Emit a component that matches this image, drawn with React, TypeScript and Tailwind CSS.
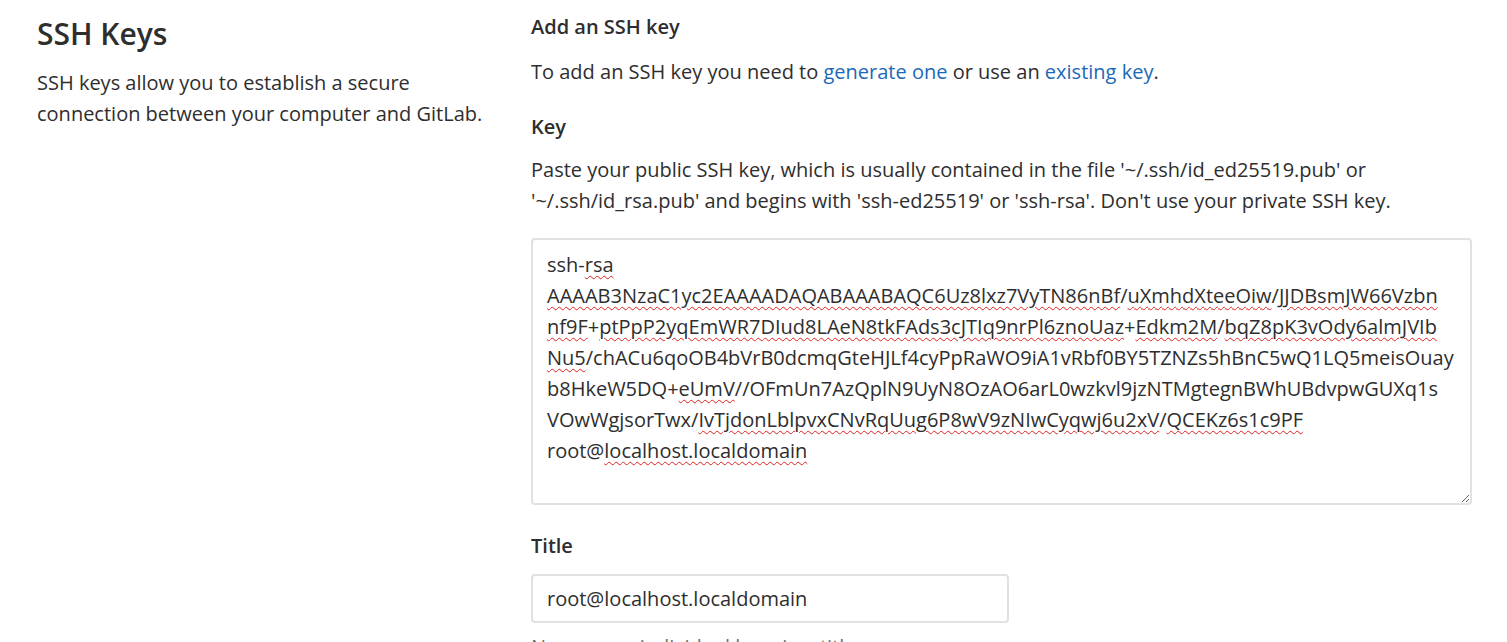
import React from 'react'

type Seg = { t: string; bad?: boolean }

// one entry per visual line of the pasted key, with the words the spell checker flags
const keyLines: Seg[][] = [
  [{ t: 'ssh-' }, { t: 'rsa', bad: true }],
  [
    { t: 'AAAAB3NzaC1yc2EAAAADAQABAAABAQC6Uz8lxz7VyTN86nBf', bad: true },
    { t: '/' },
    { t: 'uXmhdXteeOiw', bad: true },
    { t: '/' },
    { t: 'JJDBsmJW66Vzbn', bad: true },
  ],
  [
    { t: 'nf9F', bad: true },
    { t: '+' },
    { t: 'ptPpP2yqEmWR7DIud8LAeN8tkFAds3cJTIq9nrPl6znoUaz', bad: true },
    { t: '+' },
    { t: 'Edkm2M', bad: true },
    { t: '/' },
    { t: 'bqZ8pK3vOdy6almJVIb', bad: true },
  ],
  [{ t: 'Nu5', bad: true }, { t: '/chACu6qoOB4bVrB0dcmqGteHJLf4cyPpRaWO9iA1vRbf0BY5TZNZs5hBnC5wQ1LQ5meisOuay' }],
  [
    { t: 'b8HkeW5DQ+' },
    { t: 'eUmV', bad: true },
    { t: '//OFmUn7AzQplN9UyN8OzAO6arL0wzkvl9jzNTMgtegnBWhUBdvpwGUXq1s' },
  ],
  [
    { t: 'VOwWgjsorTwx/' },
    { t: 'IvTjdonLblpvxCNvRqUug6P8wV9zNIwCyqwj6u2xV', bad: true },
    { t: '/' },
    { t: 'QCEKz6s1c9PF', bad: true },
  ],
  [{ t: 'root@' }, { t: 'localhost.localdomain', bad: true }],
]

function KeyBox() {
  return (
    <div className="mt-[22px] h-[267px] w-full resize-y overflow-hidden rounded-[4px] border-2 border-[#e1e1e1] bg-white px-[14px] pt-[9px] whitespace-pre text-[#2e2e2e]">
      {keyLines.map((line, i) => (
        <div key={i}>
          {line.map((s, j) =>
            s.bad ? (
              <span key={j} className="underline decoration-wavy decoration-[#e02020] decoration-1 underline-offset-[3px]">
                {s.t}
              </span>
            ) : (
              <span key={j}>{s.t}</span>
            ),
          )}
        </div>
      ))}
    </div>
  )
}

export default function App() {
  return (
    <div className="flex min-h-screen bg-white font-['Open_Sans',sans-serif] text-[20px] leading-[31px] text-[#2e2e2e]">
      <div className="w-[494px] shrink-0 pl-[37px] pr-[10px]">
        <h4 className="mt-[17px] text-[30px] leading-[34px] font-semibold">SSH Keys</h4>
        <p className="mt-[16px]">SSH keys allow you to establish a secure connection between your computer and GitLab.</p>
      </div>

      <div className="flex-1 pt-[11px] pr-[35px] pl-[37px]">
        <h5 className="font-semibold">Add an SSH key</h5>
        <p className="mt-[14px]">
          To add an SSH key you need to{' '}
          <a href="#" className="text-[#1b69b6]">
            generate one
          </a>{' '}
          or use an{' '}
          <a href="#" className="text-[#1b69b6]">
            existing key
          </a>
          .
        </p>

        <label className="mt-[24px] block font-semibold">Key</label>
        <p className="mt-[12px]">
          Paste your public SSH key, which is usually contained in the file '~/.ssh/id_ed25519.pub' or '~/.ssh/id_rsa.pub' and
          begins with 'ssh-ed25519' or 'ssh-rsa'. Don't use your private SSH key.
        </p>

        <KeyBox />

        <label className="mt-[25px] block font-semibold">Title</label>
        <input
          readOnly
          value="root@localhost.localdomain"
          className="mt-[13px] block h-[49px] w-[478px] rounded-[4px] border-2 border-[#e1e1e1] bg-white px-[14px] text-[#2e2e2e] outline-none"
        />
        <p className="mt-[8px] text-[#707070]">Name your individual key via a title</p>
      </div>
    </div>
  )
}
